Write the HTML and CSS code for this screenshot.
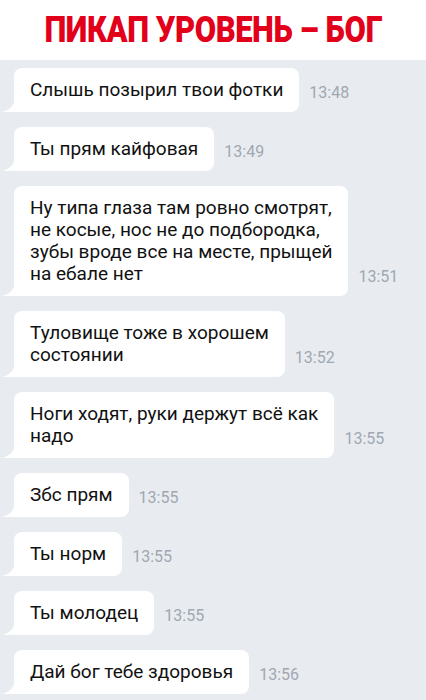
FILE: index.html
```html
<!DOCTYPE html>
<html lang="ru">
<head>
  <meta charset="UTF-8">
  <meta name="viewport" content="width=device-width, initial-scale=1.0">
  <title>Пикап уровень – бог</title>
  <link rel="stylesheet" href="styles.css">
</head>
<body>

<header class="top">
  <h1>ПИКАП УРОВЕНЬ – БОГ</h1>
</header>

<div class="chat">
  <div class="row">
    <div class="bubble">Слышь позырил твои фотки</div>
    <span class="time">13:48</span>
  </div>
  <div class="row">
    <div class="bubble">Ты прям кайфовая</div>
    <span class="time">13:49</span>
  </div>
  <div class="row">
    <div class="bubble">Ну типа глаза там ровно смотрят,<br>не косые, нос не до подбородка,<br>зубы вроде все на месте, прыщей<br>на ебале нет</div>
    <span class="time">13:51</span>
  </div>
  <div class="row">
    <div class="bubble">Туловище тоже в хорошем<br>состоянии</div>
    <span class="time">13:52</span>
  </div>
  <div class="row">
    <div class="bubble">Ноги ходят, руки держут всё как<br>надо</div>
    <span class="time">13:55</span>
  </div>
  <div class="row">
    <div class="bubble">Збс прям</div>
    <span class="time">13:55</span>
  </div>
  <div class="row">
    <div class="bubble">Ты норм</div>
    <span class="time">13:55</span>
  </div>
  <div class="row">
    <div class="bubble">Ты молодец</div>
    <span class="time">13:55</span>
  </div>
  <div class="row">
    <div class="bubble">Дай бог тебе здоровья</div>
    <span class="time">13:56</span>
  </div>
</div>

</body>
</html>
```

FILE: styles.css
```css
* { box-sizing: border-box; }

body {
  margin: 0;
  font-family: Roboto, 'Liberation Sans', sans-serif;
  background: #e8ecf1;
  height: 700px;
  overflow: hidden;
}

.top {
  background: #fff;
  height: 60px;
  display: flex;
  justify-content: center;
  align-items: center;
}

.top h1 {
  margin: 0;
  font-family: Roboto, 'Liberation Sans', sans-serif;
  font-size: 36px;
  font-weight: 900;
  color: #e2001a;
  letter-spacing: -0.5px;
  line-height: 1;
  transform: scaleX(0.86);
  white-space: nowrap;
}

.chat {
  display: flex;
  flex-direction: column;
  gap: 15px;
  padding: 8px 14px 0;
}

.row {
  display: flex;
  align-items: flex-end;
  gap: 10px;
}

.bubble {
  position: relative;
  background: #fff;
  color: #111;
  font-size: 19px;
  line-height: 22px;
  padding: 11px 16px;
  border-radius: 8px 8px 8px 0;
  white-space: nowrap;
}

.bubble::before {
  content: "";
  position: absolute;
  left: -12px;
  bottom: 0;
  width: 12px;
  height: 11px;
  background: #fff;
  clip-path: path('M12 0 C12 5 7 9 0 11 L12 11 Z');
}

.time {
  font-size: 16px;
  color: #a0a7b0;
  margin-bottom: 11px;
  line-height: 16px;
}
```
